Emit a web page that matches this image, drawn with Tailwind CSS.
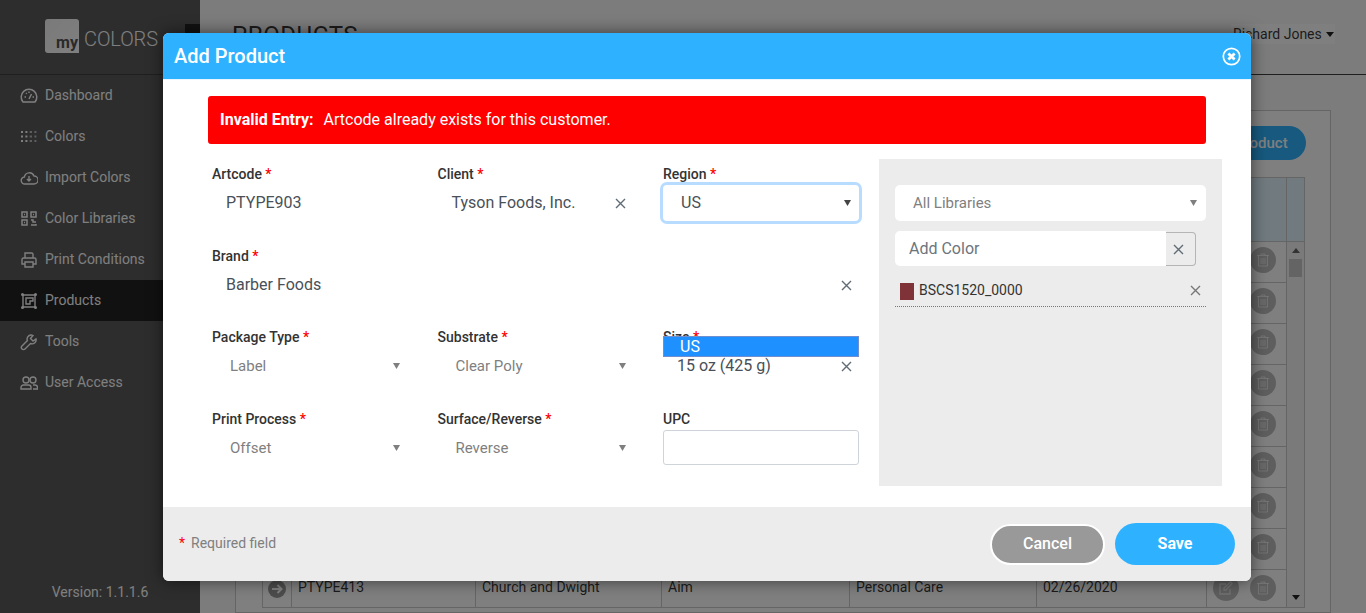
<!DOCTYPE html>
<html lang="en">
<head>
    <meta charset="UTF-8">
    <title>myColors - Products</title>
    <script src="https://cdn.jsdelivr.net/npm/@tailwindcss/browser@4"></script>
</head>
<body class="font-[Roboto,sans-serif] overflow-hidden">
    <div class="relative flex h-[613px] w-[1366px] overflow-hidden bg-[#f9f9f9]">
        <!-- Sidebar -->
        <aside class="flex w-[200px] shrink-0 flex-col bg-[#5a5a5a] text-white">
            <div class="flex h-[75px] shrink-0 items-center border-b border-[#3e3e3e] pl-[45px] pb-[2px]">
                <div class="flex h-[34px] w-[34px] items-end justify-end rounded-l-[3px] rounded-tr-[3px] bg-gradient-to-br from-[#f4f4f4] to-[#fff] pr-[1px] text-[16px] font-bold leading-[20px] text-[#555]">my</div>
                <span class="ml-[5px] mt-[5px] text-[20px] font-light tracking-[-0.1px] text-white">COLORS</span>
                <div class="ml-auto mb-[14px] h-[10px] w-[15px] bg-[#222]"></div>
            </div>
            <nav id="nav" class="flex flex-col"></nav>
            <div class="mt-auto pb-[10px] text-center text-[14px]">Version: 1.1.1.6</div>
        </aside>

        <!-- Main page behind the dialog -->
        <main class="flex min-w-0 flex-1 flex-col">
            <header class="flex h-[75px] shrink-0 items-start justify-between border-b border-[#3e3e3e] pl-[32px] pr-[31px]">
                <h1 class="mt-[21px] text-[24px] leading-[28px] tracking-[0.6px] text-black/80">PRODUCTS</h1>
                <div class="mt-[24px] flex h-[20px] w-[104px] items-center gap-[4px] whitespace-nowrap border-2 border-white bg-white pl-0 text-[14px] text-black/80">Richard Jones
                    <svg class="shrink-0" width="8" height="5" viewBox="0 0 8 5"><path d="M0 0h8L4 5z" fill="#222"/></svg>
                </div>
            </header>
            <section class="mx-[35px] mt-[35px] h-[510px] border border-[#cacaca] bg-white pl-[26px] pr-[25px] pt-[15px]">
                <div class="-mr-[1px] flex justify-end">
                    <div class="flex h-[34px] w-[120px] items-center justify-center rounded-full bg-[#2eb2ff] text-[15px] font-medium text-white">Add Product</div>
                </div>
                <div class="mt-[17px] flex h-[431px] flex-col overflow-hidden border border-[#cacaca]">
                    <div class="flex h-[64px] shrink-0 border-b border-[#cacaca] bg-[#e0f4ff]">
                        <div class="w-[1024px] border-r border-[#cacaca]"></div>
                        <div class="flex-1"></div>
                    </div>
                    <div class="flex min-h-0 flex-1">
                        <div id="rows" class="w-[1024px] border-r border-[#cacaca]"></div>
                        <div class="relative flex-1 bg-[#f4f4f4]">
                            <svg class="absolute left-[5px] top-[6px]" width="8" height="5" viewBox="0 0 8 5"><path d="M0 5h8L4 0z" fill="#666"/></svg>
                            <div class="absolute left-[2px] top-[17px] h-[18px] w-[13px] bg-[#c9c9c9]"></div>
                            <svg class="absolute bottom-[7px] left-[5px]" width="8" height="5" viewBox="0 0 8 5"><path d="M0 0h8L4 5z" fill="#222"/></svg>
                        </div>
                    </div>
                </div>
            </section>
        </main>

        <!-- Backdrop -->
        <div class="absolute inset-0 bg-black/50"></div>

        <!-- Add Product dialog -->
        <div class="absolute left-[163px] top-[33px] flex h-[548px] w-[1088px] flex-col overflow-hidden rounded-[6px] bg-white shadow-[0_0_16px_rgba(0,0,0,0.55)]">
            <div class="flex h-[47px] shrink-0 items-center justify-between border-b border-[#eaf6ff] bg-[#2eb2ff] pl-[11px] pr-[10px]">
                <h2 class="text-[20px] font-medium text-white">Add Product</h2>
                <svg width="19" height="19" viewBox="0 0 19 19" fill="none" stroke="#fff">
                    <circle cx="9.500" cy="9.500" r="8.200" stroke-width="1.700"/>
                    <path d="M6.400 6.400l6.200 6.200M12.600 6.400l-6.200 6.200" stroke-width="2.800"/>
                </svg>
            </div>

            <div class="flex min-h-0 flex-1 flex-col pt-[16px]">
                <div class="mx-[45px] flex h-[48px] shrink-0 items-center rounded-[3px] bg-[#ff0000] pl-[12px] text-[16px] text-white">
                    <strong class="mr-[10px] font-bold">Invalid Entry:</strong>
                    <span>Artcode already exists for this customer.</span>
                </div>

                <div class="mt-[15px] flex pl-[49px]">
                    <form class="relative grid h-[327px] w-[647px] grid-cols-[196px_196px_196px] grid-rows-[82px_81px_82px_82px] gap-x-[29.5px] pt-[5px]">
                        <div>
                            <label class="block text-[14px] font-medium leading-[20px] text-[#333]">Artcode <span class="text-[#ff0000]">*</span></label>
                            <div class="mt-[9px] pl-[14px] text-[16px] leading-[20px] text-[#495057]">PTYPE903</div>
                        </div>
                        <div>
                            <label class="block text-[14px] font-medium leading-[20px] text-[#333]">Client <span class="text-[#ff0000]">*</span></label>
                            <div class="mt-[9px] flex items-center justify-between pl-[14px] pr-[8px] text-[16px] leading-[20px] text-[#495057]">Tyson Foods, Inc.
                                <svg width="11" height="11" viewBox="0 0 11 11" stroke="#5f6b75" stroke-width="1.4"><path d="M1 1l9 9M10 1l-9 9"/></svg>
                            </div>
                        </div>
                        <div>
                            <label class="block text-[14px] font-medium leading-[20px] text-[#333]">Region <span class="text-[#ff0000]">*</span></label>
                            <div class="mt-[1px] flex h-[36px] items-center justify-between rounded-[4px] pb-[1px] pl-[18px] pr-[8px] text-[16px] text-[#495057] ring-[3px] ring-[#b8dcff]">US
                                <svg width="7" height="6" viewBox="0 0 7 6"><path d="M0 0h7L3.5 6z" fill="#444"/></svg>
                            </div>
                        </div>

                        <div class="col-span-3">
                            <label class="block text-[14px] font-medium leading-[20px] text-[#333]">Brand <span class="text-[#ff0000]">*</span></label>
                            <div class="mt-[9px] flex items-center justify-between pl-[14px] pr-[7px] text-[16px] leading-[20px] text-[#495057]">Barber Foods
                                <svg width="11" height="11" viewBox="0 0 11 11" stroke="#5f6b75" stroke-width="1.4"><path d="M1 1l9 9M10 1l-9 9"/></svg>
                            </div>
                        </div>

                        <div>
                            <label class="block text-[14px] font-medium leading-[20px] text-[#333]">Package Type <span class="text-[#ff0000]">*</span></label>
                            <div class="mt-[9px] flex items-center justify-between pl-[18px] pr-[8px] text-[15px] leading-[20px] text-[#7f7f7f]">Label
                                <svg width="7" height="6" viewBox="0 0 7 6"><path d="M0 0h7L3.5 6z" fill="#7f7f7f"/></svg>
                            </div>
                        </div>
                        <div>
                            <label class="block text-[14px] font-medium leading-[20px] text-[#333]">Substrate <span class="text-[#ff0000]">*</span></label>
                            <div class="mt-[9px] flex items-center justify-between pl-[18px] pr-[8px] text-[15px] leading-[20px] text-[#7f7f7f]">Clear Poly
                                <svg width="7" height="6" viewBox="0 0 7 6"><path d="M0 0h7L3.5 6z" fill="#7f7f7f"/></svg>
                            </div>
                        </div>
                        <div>
                            <label class="block text-[14px] font-medium leading-[20px] text-[#333]">Size <span class="text-[#ff0000]">*</span></label>
                            <div class="mt-[9px] flex items-center justify-between pl-[14px] pr-[7px] text-[16px] leading-[20px] text-[#495057]">15 oz (425 g)
                                <svg width="11" height="11" viewBox="0 0 11 11" stroke="#5f6b75" stroke-width="1.4"><path d="M1 1l9 9M10 1l-9 9"/></svg>
                            </div>
                        </div>

                        <div>
                            <label class="block text-[14px] font-medium leading-[20px] text-[#333]">Print Process <span class="text-[#ff0000]">*</span></label>
                            <div class="mt-[9px] flex items-center justify-between pl-[18px] pr-[8px] text-[15px] leading-[20px] text-[#7f7f7f]">Offset
                                <svg width="7" height="6" viewBox="0 0 7 6"><path d="M0 0h7L3.5 6z" fill="#7f7f7f"/></svg>
                            </div>
                        </div>
                        <div>
                            <label class="block text-[14px] font-medium leading-[20px] text-[#333]">Surface/Reverse <span class="text-[#ff0000]">*</span></label>
                            <div class="mt-[9px] flex items-center justify-between pl-[18px] pr-[8px] text-[15px] leading-[20px] text-[#7f7f7f]">Reverse
                                <svg width="7" height="6" viewBox="0 0 7 6"><path d="M0 0h7L3.5 6z" fill="#7f7f7f"/></svg>
                            </div>
                        </div>
                        <div>
                            <label class="block text-[14px] font-medium leading-[20px] text-[#333]">UPC</label>
                            <input type="text" class="mt-[1px] h-[35px] w-full rounded-[3px] border border-[#ced4da] bg-white">
                        </div>

                        <!-- Open Region dropdown -->
                        <div class="absolute left-[451px] top-[177px] flex h-[21px] w-[196px] items-center border border-[#6f8fd0] bg-[#1e90ff] pl-[16px] text-[16px] text-white">US</div>
                    </form>

                    <div class="ml-[20px] h-[327px] w-[343px] bg-[#ececec] px-[16px] pt-[26px]">
                        <div class="flex h-[36px] items-center justify-between rounded-[5px] bg-white pl-[18px] pr-[9px] text-[15px] text-[#7f7f7f]">All Libraries
                            <svg width="7" height="6" viewBox="0 0 7 6"><path d="M0 0h7L3.5 6z" fill="#7f7f7f"/></svg>
                        </div>
                        <div class="mt-[10px] flex h-[35px] w-[301px]">
                            <div class="flex flex-1 items-center rounded-l-[5px] bg-white pl-[14px] text-[16px] text-[#6c757d]">Add Color</div>
                            <div class="mt-[1px] flex h-[34px] w-[30px] items-center justify-center rounded-r-[4px] border border-l-0 border-[#b5b5b5] pr-[5px]">
                                <svg width="11" height="11" viewBox="0 0 11 11" stroke="#5f6b75" stroke-width="1.4"><path d="M1 1l9 9M10 1l-9 9"/></svg>
                            </div>
                        </div>
                        <div class="mt-[10px] flex h-[31px] items-center border-b border-dotted border-[#777] pl-[5px] pr-[5px] text-[14px] text-[#333]">
                            <span class="h-[17px] w-[14px] bg-[#7f3338]"></span>
                            <span class="ml-[5px] -mt-[2px]">BSCS1520_0000</span>
                            <svg class="ml-auto -mt-[2px]" width="11" height="11" viewBox="0 0 11 11" stroke="#777" stroke-width="1.4"><path d="M1 1l9 9M10 1l-9 9"/></svg>
                        </div>
                    </div>
                </div>
            </div>

            <footer class="flex h-[74px] shrink-0 items-center bg-[#ececec] pl-[16px] pr-[16px]">
                <span class="mb-[2px] text-[14px] text-[#ff0000]">*</span>
                <span class="mb-[2px] ml-[6px] text-[14px] text-[#7f7f7f]">Required field</span>
                <button class="ml-auto h-[41px] w-[115px] rounded-full border-2 border-white bg-[#999] text-[16px] font-medium text-white">Cancel</button>
                <button class="ml-[10px] h-[42px] w-[120px] rounded-full bg-[#2eb2ff] text-[16px] font-bold text-white">Save</button>
            </footer>
        </div>
    </div>

    <script>
        const navItems = [
            ['Dashboard', '<path stroke-width="1.500" d="M3 15a7.800 7.800 0 1 1 12 0z"/><path stroke-width="1.500" d="M9 12l2.500-5M4.500 10h1.500M12.500 10h1.500M6 6l.8.8M9 4.500v1.500"/>'],
            ['Colors', '<path stroke-dasharray="2 2.400" stroke-width="2.200" d="M1 4h9M1 8.500h9M1 13h9"/><path stroke-opacity="0.6" stroke-dasharray="2 2.400" stroke-width="2.200" d="M10 4h8M10 8.500h8M10 13h8"/>'],
            ['Import Colors', '<path stroke-width="1.400" d="M5 15a3.500 3.500 0 0 1-.6-7A5 5 0 0 1 14 7a4 4 0 0 1 0 8z"/><path stroke-width="1.400" d="M9 7v5M7 10l2 2 2-2"/>'],
            ['Color Libraries', '<path stroke-width="1.500" d="M2 2h5v5H2zM11 2h5v5h-5zM2 10h5v5H2zM11 10h2v2h3M16 14v1h-5"/><path stroke-width="1.500" d="M4 4.500h1M13 4.500h1M4 12.500h1"/>'],
            ['Print Conditions', '<path stroke-width="1.400" d="M5 7V2h7l1 1v4M5 13H2V8.500A1.500 1.500 0 0 1 3.500 7h11A1.500 1.500 0 0 1 16 8.500V13h-3M5 11h8v5H5z"/>'],
            ['Products', '<path stroke-width="1.400" d="M3 3h12v12H3z"/><path stroke-width="1.400" d="M6 6h7v3h-3v3H6z"/><path stroke-width="3" stroke-linecap="round" d="M2.500 2.500h.01M15.500 2.500h.01M2.500 15.500h.01M15.500 15.500h.01"/>'],
            ['Tools', '<path stroke-width="1.400" d="M11 2a4 4 0 0 0-3.600 5.500L2 13a2 2 0 0 0 3 3l5.500-5.500A4 4 0 0 0 16 6l-3 2-2.500-2.500L13 2.500A4 4 0 0 0 11 2z"/>'],
            ['User Access', '<circle stroke-width="1.400" cx="6" cy="6" r="3"/><circle stroke-width="1.400" cx="13" cy="6" r="3"/><path stroke-width="1.400" d="M1 15v-1.500A2.500 2.500 0 0 1 3.500 11h5A2.500 2.500 0 0 1 11 13.500V15zM13 11h2a2.500 2.500 0 0 1 2.500 2.500V15H13"/>']
        ];

        document.getElementById('nav').innerHTML = navItems.map(([label, icon]) => `
            <a class="flex h-[41px] items-center pl-[20px] text-[14px] ${label === 'Products' ? 'bg-[#222]' : ''}">
                <svg class="mr-[7px] shrink-0" width="18" height="18" viewBox="0 0 18 18" fill="none" stroke="#fff">${icon}</svg>
                ${label}
            </a>
        `).join('');

        const trash = '<svg width="12" height="14" viewBox="0 0 12 14" fill="none" stroke="#ffffff" stroke-opacity="0.6"><path d="M0 2.500h12M4 2.500V1h4v1.500M1.500 2.500V13h9V2.500M4 5v6M6 5v6M8 5v6"/></svg>';
        const edit = '<svg width="14" height="14" viewBox="0 0 14 14" fill="none" stroke="#ffffff" stroke-opacity="0.6" stroke-width="1.300"><path d="M11 8v5H1V3h6M5 7l6.500-6 1.500 1.500L7 9H5z"/></svg>';

        // only the last row is readable around the dialog
        const rows = Array.from({ length: 9 }, (_, i) => {
            const last = i === 8;
            return `
            <div class="flex h-[41px] items-stretch border-b border-[#cacaca] text-[14px] text-black/80">
                <div class="flex w-[29px] items-center justify-center border-r border-[#cacaca] pb-[3px]">
                    ${last ? '<svg width="18" height="18" viewBox="0 0 18 18"><circle cx="9" cy="9" r="9" fill="#999"/><path d="M4 9h9M9.500 5l4 4-4 4" fill="none" stroke="#fff" stroke-width="2"/></svg>' : ''}
                </div>
                <div class="w-[184px] border-r border-[#cacaca] pl-[6px] pt-[7px]">${last ? 'PTYPE413' : ''}</div>
                <div class="w-[186px] border-r border-[#cacaca] pl-[6px] pt-[7px]">${last ? 'Church and Dwight' : ''}</div>
                <div class="w-[188px] border-r border-[#cacaca] pl-[6px] pt-[7px]">${last ? 'Aim' : ''}</div>
                <div class="w-[187px] border-r border-[#cacaca] pl-[6px] pt-[7px]">${last ? 'Personal Care' : ''}</div>
                <div class="w-[170px] border-r border-[#cacaca] pl-[6px] pt-[7px]">${last ? '02/26/2020' : ''}</div>
                <div class="flex flex-1 items-center justify-center gap-[11px] pb-[4px] pr-[4px]">
                    <span class="flex h-[26px] w-[26px] items-center justify-center rounded-full bg-[#bdbdbd]">${edit}</span>
                    <span class="flex h-[26px] w-[26px] items-center justify-center rounded-full bg-[#bdbdbd]">${trash}</span>
                </div>
            </div>`;
        });
        document.getElementById('rows').innerHTML = rows.join('');
    </script>
</body>
</html>
